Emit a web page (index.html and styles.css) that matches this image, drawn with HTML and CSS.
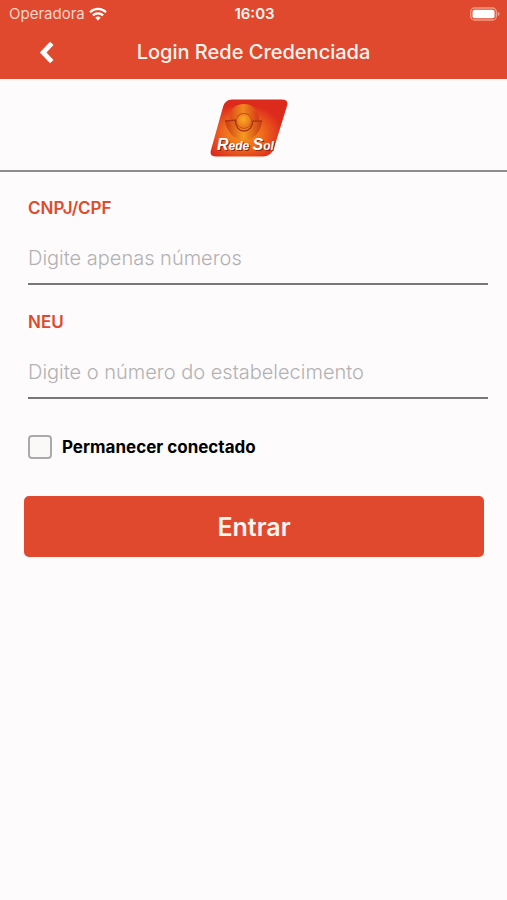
FILE: index.html
```html
<!DOCTYPE html>
<html lang="pt-BR">
<head>
  <meta charset="UTF-8">
  <meta name="viewport" content="width=device-width, initial-scale=1">
  <title>Login Rede Credenciada</title>
  <link rel="stylesheet" href="styles.css">
</head>
<body>

<header class="topbar">
  <div class="status">
    <div class="carrier">
      <span>Operadora</span>
      <svg class="wifi" viewBox="0 0 18 14" aria-hidden="true">
        <g fill="none" stroke="#fff" stroke-width="2.3">
          <path d="M1 5.2a11.4 11.4 0 0 1 16 0"/>
          <path d="M3.9 8.4a7.2 7.2 0 0 1 10.2 0"/>
        </g>
        <path d="M9 13.6l-2.7-2.8a3.8 3.8 0 0 1 5.4 0z" fill="#fff"/>
      </svg>
    </div>
    <span class="clock">16:03</span>
    <svg class="battery" viewBox="0 0 31 14" aria-hidden="true">
      <rect x=".8" y=".8" width="26.4" height="12.4" rx="4" fill="none" stroke="#f39a86" stroke-width="1.4"/>
      <rect x="2.6" y="2.6" width="22.8" height="8.8" rx="2" fill="#fff"/>
      <path d="M28.6 4.6q2 .8 2 2.4t-2 2.4z" fill="#f39a86"/>
    </svg>
  </div>
  <nav class="nav">
    <button type="button" class="back" aria-label="Voltar">
      <svg viewBox="0 0 16 24" aria-hidden="true">
        <path d="M13 2.500L4 12l9 9.500" fill="none" stroke="#fff" stroke-width="5"/>
      </svg>
    </button>
    <h1>Login Rede Credenciada</h1>
  </nav>
</header>

<div class="brand">
  <svg class="logo" viewBox="0 0 78 58" role="img" aria-label="Rede Sol">
    <defs>
      <radialGradient id="bg" cx=".42" cy=".6" r=".52">
        <stop offset="0" stop-color="#f79a1c"/>
        <stop offset=".5" stop-color="#ee6a1c"/>
        <stop offset="1" stop-color="#dc2a1c"/>
      </radialGradient>
      <radialGradient id="sun" cx=".45" cy=".4" r=".6">
        <stop offset="0" stop-color="#fbaa24"/>
        <stop offset="1" stop-color="#e8701a"/>
      </radialGradient>
      <linearGradient id="rays" x1="0" y1="0" x2="1" y2="0">
        <stop offset="0" stop-color="#dd4a1a"/>
        <stop offset=".45" stop-color="#f08a1e"/>
        <stop offset="1" stop-color="#d8341a"/>
      </linearGradient>
      <linearGradient id="bowl" x1="0" y1="0" x2="1" y2="0">
        <stop offset="0" stop-color="#c93a16"/>
        <stop offset=".5" stop-color="#f59a20"/>
        <stop offset="1" stop-color="#c93a16"/>
      </linearGradient>
    </defs>
    <path d="M22 .5H72Q79 .5 77 7L64 49Q61 57.500 53 57.500H6Q-1 57.500 1 51L13 8Q15 .5 22 .5z" fill="url(#bg)"/>
    <path d="M20 20C19 11 25 5 34 5C43 5 49 11 49 21H42C41 16 38 14 34 14C30 14 27 16 26 20z" fill="url(#rays)"/>
    <path d="M15 22L25 21C26 28 29 32 34 32C39 32 42 28 43 22H52C51 33 44 41 34 41C24 41 17 33 15 22z" fill="url(#bowl)"/>
    <path d="M15 22L25 21C26 28 29 32 34 32C39 32 42 28 43 22H52" fill="none" stroke="#ab3212" stroke-width="1.5"/>
    <circle cx="34" cy="22" r="7.500" fill="url(#sun)" stroke="#bd4814" stroke-width=".8"/>
    <text class="logo-shadow" x="8" y="52"><tspan class="cap">R</tspan>ede <tspan class="cap">S</tspan>ol</text>
    <text class="logo-text" x="7" y="51"><tspan class="cap">R</tspan>ede <tspan class="cap">S</tspan>ol</text>
  </svg>
</div>

<form class="login">
  <div class="field">
    <label for="cnpj">CNPJ/CPF</label>
    <input type="text" id="cnpj" inputmode="numeric" placeholder="Digite apenas números">
  </div>

  <div class="field">
    <label for="neu">NEU</label>
    <input type="text" id="neu" inputmode="numeric" placeholder="Digite o número do estabelecimento">
  </div>

  <label class="remember">
    <input type="checkbox" id="remember">
    Permanecer conectado
  </label>

  <button type="submit" class="submit">Entrar</button>
</form>

</body>
</html>
```

FILE: styles.css
```css
* {
  box-sizing: border-box;
}
body {
  margin: 0;
  min-height: 100vh;
  font-family: Inter, 'Liberation Sans', sans-serif;
  background-color: #fdfbfc;
  color: #111;
}

/* top bar */
.topbar {
  background-color: #e0492d;
  color: #fff4f0;
}
.status {
  display: grid;
  grid-template-columns: 1fr auto 1fr;
  align-items: center;
  height: 27px;
  padding: 0 7px 0 9px;
  font-size: 15px;
}
.carrier {
  display: flex;
  align-items: center;
  gap: 4px;
  color: #fbd5ca;
}
.wifi {
  width: 18px;
  height: 14px;
}
.clock {
  font-weight: 600;
}
.battery {
  width: 30px;
  height: 14px;
  justify-self: end;
}
.nav {
  display: grid;
  grid-template-columns: 1fr auto 1fr;
  align-items: center;
  height: 52px;
  padding-bottom: 2px;
}
.back {
  justify-self: start;
  display: flex;
  margin-left: 27px;
  padding: 8px 12px;
  border: none;
  background: none;
  cursor: pointer;
}
.back svg {
  width: 16px;
  height: 23px;
}
.nav h1 {
  margin: 0;
  font-size: 20px;
  font-weight: 500;
}

/* logo */
.brand {
  display: flex;
  justify-content: center;
  padding: 20px 0 13px;
  border-bottom: 2px solid #8e8c8d;
}
.logo {
  width: 78px;
  height: 58px;
  margin-right: 9px;
}
.logo text {
  font-family: 'Liberation Sans', sans-serif;
  font-size: 12px;
  font-weight: bold;
  font-style: italic;
}
.logo .cap {
  font-size: 16px;
}
.logo-text {
  fill: #fff;
}
.logo-shadow {
  fill: #8e2410;
}

/* form */
.login {
  padding: 26px 19px 27px 28px;
}
.field {
  margin-bottom: 27px;
}
.field label {
  display: block;
  font-size: 17px;
  line-height: 20px;
  font-weight: 600;
  color: #e0492d;
}
.field input {
  width: 100%;
  height: 52px;
  margin-top: 15px;
  padding: 0;
  border: none;
  border-bottom: 2px solid #777;
  border-radius: 0;
  background: none;
  font-family: inherit;
  font-size: 20px;
  font-weight: 300;
  color: #111;
  outline: none;
}
.field input::placeholder {
  color: #b3b1b2;
  opacity: 1;
}
.remember {
  display: flex;
  align-items: center;
  gap: 10px;
  margin-top: 36px;
  font-size: 17px;
  font-weight: 700;
  color: #000;
}
.remember input {
  appearance: none;
  width: 24px;
  height: 24px;
  margin: 0;
  border: 2px solid #aaa;
  border-radius: 4px;
  background-color: #faf9f8;
}
.remember input:checked {
  border-color: #e0492d;
  background-color: #e0492d;
}
.submit {
  display: block;
  width: 100%;
  height: 61px;
  border: none;
  border-radius: 5px;
  background-color: #e0492d;
  color: #fff4f0;
  font-family: inherit;
  font-size: 25px;
  font-weight: 600;
  cursor: pointer;
}
.login .submit {
  margin: 37px 0 0 -4px;
}
```
